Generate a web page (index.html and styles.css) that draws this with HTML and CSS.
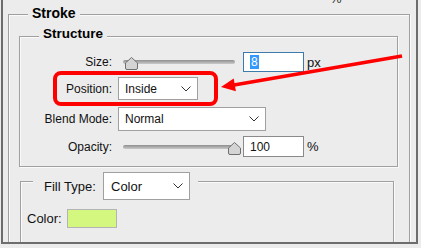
FILE: index.html
```html
<!DOCTYPE html>
<html lang="en">
<head>
    <meta charset="UTF-8">
    <meta name="viewport" content="width=device-width, initial-scale=1.0">
    <title>Layer Style - Stroke</title>
    <link rel="stylesheet" href="styles.css">
</head>
<body>

    <div class="frame">
        <span class="cut-text">%</span>

        <div class="group stroke">
            <div class="group-title">Stroke</div>

            <div class="group structure">
                <div class="group-title">Structure</div>
                <div class="rows">
                    <div class="row row-size">
                        <span class="label">Size:</span>
                        <div class="slider">
                            <div class="track"></div>
                            <svg class="thumb thumb-left" width="13" height="13" viewBox="0 0 13 13">
                                <path d="M6.5 0.5 L12.5 6 V11 Q12.5 12.5 11 12.5 H2 Q0.5 12.5 0.5 11 V6 Z" fill="#d4d4d4" stroke="#6f6f6f"/>
                            </svg>
                        </div>
                        <div class="field focused"><span class="sel">8</span></div>
                        <span class="unit">px</span>
                    </div>

                    <div class="row row-position">
                        <span class="label">Position:</span>
                        <div class="select select-position">
                            <span>Inside</span>
                            <svg class="chevron" width="10" height="6" viewBox="0 0 10 6"><polyline points="0.5,0.5 5,5 9.5,0.5" fill="none" stroke="#333"/></svg>
                        </div>
                    </div>

                    <div class="row row-blend">
                        <span class="label">Blend Mode:</span>
                        <div class="select select-blend">
                            <span>Normal</span>
                            <svg class="chevron" width="10" height="6" viewBox="0 0 10 6"><polyline points="0.5,0.5 5,5 9.5,0.5" fill="none" stroke="#333"/></svg>
                        </div>
                    </div>

                    <div class="row row-opacity">
                        <span class="label">Opacity:</span>
                        <div class="slider">
                            <div class="track"></div>
                            <svg class="thumb thumb-right" width="13" height="13" viewBox="0 0 13 13">
                                <path d="M6.5 0.5 L12.5 6 V11 Q12.5 12.5 11 12.5 H2 Q0.5 12.5 0.5 11 V6 Z" fill="#d4d4d4" stroke="#6f6f6f"/>
                            </svg>
                        </div>
                        <div class="field">100</div>
                        <span class="unit">%</span>
                    </div>
                </div>
            </div>

            <div class="group fill">
                <div class="fill-legend">
                    <span class="fill-label">Fill Type:</span>
                    <div class="select select-fill">
                        <span>Color</span>
                        <svg class="chevron" width="10" height="6" viewBox="0 0 10 6"><polyline points="0.5,0.5 5,5 9.5,0.5" fill="none" stroke="#333"/></svg>
                    </div>
                </div>
                <div class="color-row">
                    <span class="color-label">Color:</span>
                    <div class="swatch"></div>
                </div>
            </div>
        </div>
    </div>

    <!-- annotation drawn over the dialog -->
    <svg class="annotation" width="421" height="248" viewBox="0 0 421 248">
        <rect x="55" y="73" width="161" height="31" rx="6" fill="none" stroke="#f00" stroke-width="4"/>
        <line x1="402" y1="56" x2="234" y2="85" stroke="#f00" stroke-width="3.5"/>
        <polygon points="221,87 233.7,78.4 235.9,91.2" fill="#f00"/>
    </svg>

</body>
</html>
```

FILE: styles.css
```css
body {
    margin: 0;
    background-color: #ececec;
    font-family: "Liberation Sans", Arial, sans-serif;
    font-size: 12px;
    color: #111;
    position: relative;
    width: 421px;
    height: 248px;
    overflow: hidden;
}
.frame {
    position: relative;
    margin-left: 1px;
    width: 413px;
    height: 242px;
    border: 2px solid #6d6d6d;
    border-top: none;
    overflow: hidden;
}
.cut-text {
    position: absolute;
    left: 327px;
    top: -9px;
    font-size: 13px;
    color: #333;
}

/* Group boxes */
.group {
    border: 1px solid #a0a0a0;
    box-shadow: 1px 1px 0 #fafafa, inset 1px 1px 0 #fafafa;
}
.group-title {
    display: table;
    margin: -10px 0 0 19px;
    padding: 0 4px;
    line-height: 16px;
    font-size: 14px;
    font-weight: bold;
    color: #000;
    background: #ececec;
}
.stroke {
    margin: 14px 6px 0 5px;
    height: 400px;
}
.structure {
    margin: 15px 11px 0 10px;
}
.structure .group-title {
    margin-top: -11px;
    font-size: 13.5px;
}
.rows {
    padding: 10px 0 9px;
}
.row {
    display: flex;
    align-items: center;
}
.row-size { height: 20px; }
.row-position { height: 23px; margin-top: 5px; }
.row-blend { height: 24px; margin-top: 7px; }
.row-opacity { height: 21px; margin-top: 5px; }
.label {
    width: 92px;
    margin-right: 6px;
    text-align: right;
}

/* Sliders */
.slider {
    position: relative;
    width: 112px;
    height: 20px;
    margin: 0 8px 0 5px;
    display: flex;
    align-items: center;
}
.track {
    width: 100%;
    height: 4px;
    border-radius: 2px;
    background: linear-gradient(#8f8f8f, #c9c9c9);
}
.thumb {
    position: absolute;
    top: 5px;
}
.thumb-left { left: 2px; }
.thumb-right { left: 105px; }

/* Inputs */
.field {
    box-sizing: border-box;
    width: 61px;
    height: 100%;
    border: 1px solid #8a8a8a;
    background: #fff;
    padding-left: 6px;
    display: flex;
    align-items: center;
}
.field.focused {
    border-color: #3d7bad;
}
.sel {
    background: #3399ff;
    color: #fff;
    line-height: 14px;
    padding: 0 1px;
}
.unit {
    margin-left: 3px;
    font-size: 13px;
}

/* Dropdowns */
.select {
    box-sizing: border-box;
    height: 100%;
    border: 1px solid #a0a0a0;
    background: #fff;
    padding-left: 6px;
    display: flex;
    align-items: center;
}
.chevron {
    margin-left: auto;
    margin-right: 6px;
}
.select-position { width: 80px; }
.select-blend { width: 148px; }

/* Fill type */
.fill {
    margin: 14px 15px 0 11px;
    height: 200px;
    font-size: 13px;
}
.fill-legend {
    display: flex;
    align-items: center;
    width: max-content;
    margin: -10px 0 0 12px;
    padding: 0 8px 0 11px;
    background: #ececec;
}
.fill-label {
    width: 56px;
}
.select-fill {
    width: 87px;
    height: 28px;
    margin-left: 3px;
    padding-left: 7px;
}
.color-row {
    display: flex;
    align-items: center;
    margin-top: 9px;
    padding-left: 6px;
}
.color-label {
    width: 40px;
}
.swatch {
    box-sizing: border-box;
    width: 50px;
    height: 19px;
    border: 1px solid #b4b4b4;
    background: #d4f77f;
}

.annotation {
    position: absolute;
    top: 0;
    left: 0;
    pointer-events: none;
}
```
